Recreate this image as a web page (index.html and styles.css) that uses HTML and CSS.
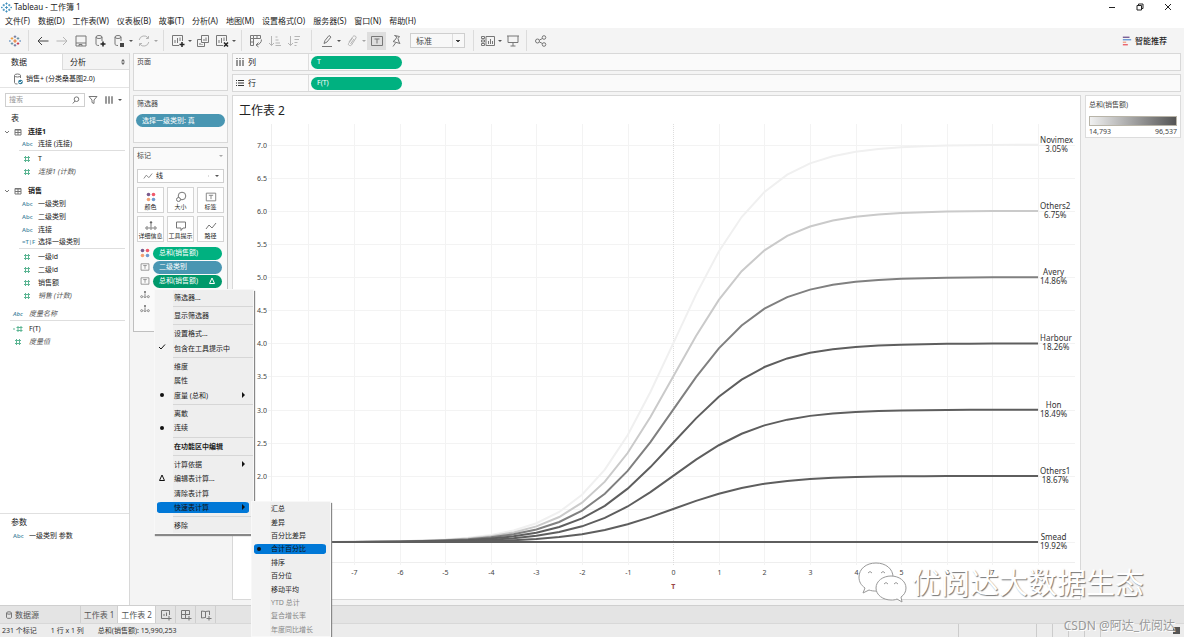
FILE: index.html
```html
<!DOCTYPE html>
<html lang="zh-CN">
<head>
<meta charset="utf-8">
<title>Tableau - 工作簿 1</title>
<link rel="stylesheet" href="styles.css">
</head>
<body>
<svg class="defs" aria-hidden="true">
  <symbol id="logo" viewBox="0 0 14 14"><path d="M7 5v4M5 7h4" stroke="#e8762c" stroke-width="1.300"/><path d="M7 .500v3M5.500 2h3M7 10.500v3M5.500 12h3" stroke="#5b6591"/><path d="M3.500 2.500v3M2 4h3" stroke="#eb9129"/><path d="M10.500 2.500v3M9 4h3M3.500 8.500v3M2 10h3" stroke="#59879b"/><path d="M10.500 8.500v3M9 10h3" stroke="#c72035"/><path d="M1 6v2M0 7h2M13 6v2M12 7h2" stroke="#7099c6"/></symbol>
  <symbol id="logoblue" viewBox="0 0 14 14"><path d="M7 5v4M5 7h4M7 .500v3M5.500 2h3M7 10.500v3M5.500 12h3M3.500 2.500v3M2 4h3M10.500 2.500v3M9 4h3M3.500 8.500v3M2 10h3M10.500 8.500v3M9 10h3M1 6v2M0 7h2M13 6v2M12 7h2" stroke="#2f86b8"/></symbol>
  <symbol id="back" viewBox="0 0 14 14"><path d="M2 7h10.500M6 3L2 7l4 4" stroke="#444"/></symbol>
  <symbol id="fwd" viewBox="0 0 14 14"><path d="M1.500 7H12M8 3l4 4-4 4"/></symbol>
  <symbol id="save" viewBox="0 0 14 14"><path d="M2 2h10v10H2zM2 9h10M5 12v-1.500h3V12"/></symbol>
  <symbol id="dbadd" viewBox="0 0 14 14"><path d="M3 3v7c0 1 1 1.500 3 1.500M9 3v4"/><ellipse cx="6" cy="3" rx="3" ry="1.500"/><path d="M10 7.500v5M7.500 10h5" stroke="#222" stroke-width="1.500"/></symbol>
  <symbol id="db" viewBox="0 0 14 14"><path d="M3 3v7c0 1 1 1.500 3 1.500M9 3v4"/><ellipse cx="6" cy="3" rx="3" ry="1.500"/><path d="M8 9h4v4H8z" fill="#444" stroke="none"/></symbol>
  <symbol id="refresh" viewBox="0 0 14 14"><path d="M2.200 6a5 5 0 0 1 9-2M11.800 8a5 5 0 0 1-9 2M9 4.500h2.500V2M5 9.500H2.500V12"/></symbol>
  <symbol id="chartadd" viewBox="0 0 14 14"><path d="M8 11.500H1.500v-10h10V7M4 9V6M6.500 9V4M9 7V3.500"/><path d="M11 8v5M8.500 10.500h5" stroke="#222" stroke-width="1.500"/></symbol>
  <symbol id="dup" viewBox="0 0 14 14"><path d="M5.500 1.500h7v7h-7zM5.500 5.500h-4v7h7v-4M8 7V5M10 7V3.500M4 11V9M6 11v-1"/></symbol>
  <symbol id="clear" viewBox="0 0 14 14"><path d="M8 11.500H1.500v-10h10V7M4 9V6M6.500 9V4M9 7V3.500"/><path d="M9 8.500l4 4M13 8.500l-4 4" stroke="#222" stroke-width="1.500"/></symbol>
  <symbol id="swap" viewBox="0 0 14 14"><path d="M1.500 1.500h3v3h-3zM4.500 1.500h7v3h-7M1.500 4.500v7h3v-7M8 1.500v3M1.500 8h3M12.500 5.500c0 3-2 5-5 5.500M9.500 8.500L7 11l2.500 2"/></symbol>
  <symbol id="sortasc" viewBox="0 0 14 14"><path d="M3.500 2v9.500M1 9l2.500 2.500L6 9M7.500 3h2M7.500 6h3M7.500 9h4.500M7.500 11.500H13"/></symbol>
  <symbol id="sortdesc" viewBox="0 0 14 14"><path d="M3.500 2v9.500M1 9l2.500 2.500L6 9M7.500 2.500H13M7.500 5.500H12M7.500 8.500h3M7.500 11.500h2"/></symbol>
  <symbol id="pen" viewBox="0 0 14 14"><path d="M4 9.500l1-3 4-5 2 1.500-4 5zM2 12.500h10"/></symbol>
  <symbol id="clip" viewBox="0 0 14 14"><path d="M4 8l4-5.500c1-1.500 4 0 3 1.500L6.500 11c-1 1.500-4 0-3-1.500L7.500 4M9 5l-3.500 5"/></symbol>
  <symbol id="tbox" viewBox="0 0 14 14"><path d="M1.500 2.500h11v9h-11zM4.500 5h5M7 5v4.500"/></symbol>
  <symbol id="pin" viewBox="0 0 14 14"><path d="M5.500 1.500l5 1-1.500 2 1 3.500 1 1.500-7-2 2-1.500 2-3zM6.500 9L4 12.500"/></symbol>
  <symbol id="cards" viewBox="0 0 14 14"><path d="M.500 2.500h3v2h-3zM.500 6h3v2h-3zM.500 9.500h3v2h-3zM5 2.500h8.500v9H5zM7.500 10V7M9.500 10V5M11.500 10V7"/></symbol>
  <symbol id="present" viewBox="0 0 14 14"><path d="M1 2h12M2 2v6.500h10V2M7 8.500V12M4.500 12h5"/></symbol>
  <symbol id="share" viewBox="0 0 14 14"><circle cx="3.500" cy="7" r="2"/><circle cx="10" cy="3.500" r="1.800"/><circle cx="10" cy="10.500" r="1.800"/><path d="M5.500 6l3-1.500M5.500 8l3 1.500"/></symbol>
  <symbol id="showme" viewBox="0 0 12 12"><path d="M1 1.500h8" stroke="#6b4c8a" stroke-width="1.500"/><path d="M1 4.500h10" stroke="#5b8fd0" stroke-width="1.500"/><path d="M1 7.500h4" stroke="#f0a080" stroke-width="1.500"/><path d="M1 10.500h6" stroke="#e8525c" stroke-width="1.500"/></symbol>
  <symbol id="hash" viewBox="0 0 10 10"><path d="M3.500 2v6M6.500 2v6M2 3.500h6M2 6.500h6" stroke="#5cb593"/></symbol>
  <symbol id="hashcalc" viewBox="0 0 10 10"><path d="M5 2v6M8 2v6M3.500 3.500h6M3.500 6.500h6" stroke="#5cb593"/><path d="M0 5h2" stroke="#5cb593"/></symbol>
  <symbol id="table" viewBox="0 0 10 10"><path d="M2 2.500h6v5.500h-6zM2 3h6M2 5.500h6M5 3v5"/></symbol>
  <symbol id="chev" viewBox="0 0 8 8"><path d="M2 3L4 5l2-2"/></symbol>
  <symbol id="source" viewBox="0 0 12 12"><path d="M2.500 2.500v7c0 1 1 1.500 3 1.500M8.500 2.500V5"/><ellipse cx="5.500" cy="2.500" rx="3" ry="1.500"/><circle cx="8.500" cy="9" r="2.300" fill="#2f7c9c" stroke="none"/><path d="M7.200 9l1 1 1.600-2" stroke="#fff"/></symbol>
  <symbol id="dots" viewBox="0 0 12 12"><g stroke="none"><circle cx="3.500" cy="3.500" r="1.800" fill="#7b5a8c"/><circle cx="8.500" cy="3.500" r="1.800" fill="#f0596a"/><circle cx="3.500" cy="8.500" r="1.800" fill="#f5a070"/><circle cx="8.500" cy="8.500" r="1.800" fill="#6f9bd0"/></g></symbol>
  <symbol id="size" viewBox="0 0 12 12"><circle cx="7" cy="5" r="3.800"/><circle cx="3.500" cy="8.500" r="2" fill="#fafafa"/></symbol>
  <symbol id="detail" viewBox="0 0 12 12"><circle cx="6" cy="2.500" r="1.200" fill="#666" stroke="none"/><path d="M6 4v2"/><circle cx="2" cy="8" r="1.200"/><circle cx="6" cy="8" r="1.200"/><circle cx="10" cy="8" r="1.200"/></symbol>
  <symbol id="tip" viewBox="0 0 12 12"><path d="M1.500 2h9v6H8l-2 2.500V8H1.500z"/></symbol>
  <symbol id="path" viewBox="0 0 12 12"><path d="M1 9l3-4 3 3 4-5"/></symbol>
  <symbol id="newsheet" viewBox="0 0 12 12"><path d="M7 9.500H1.500v-8h8V6M4 7V5M6.500 7V3.500M9 7v4.500M6.500 9.500H11.500"/></symbol>
  <symbol id="newdash" viewBox="0 0 12 12"><path d="M7 9.500H1.500v-8h8V6M5.500 1.500v8M1.500 5.500h8M9 7v4.500M6.500 9.500h5"/></symbol>
  <symbol id="newstory" viewBox="0 0 12 12"><path d="M6 9L5.500 8.500 1.500 9V2l4 .500L9.500 2v4M5.500 2.500v6M9 7v4.500M6.500 9.500h5"/></symbol>
</svg>

<div class="app">
  <header class="titlebar">
    <svg class="i12"><use href="#logoblue"/></svg>
    <h1>Tableau - 工作簿 1</h1>
    <div class="winbtns">
      <button aria-label="最小化"><svg class="i8" viewBox="0 0 8 8"><path d="M1 4.500h6" stroke="#222"/></svg></button>
      <button aria-label="还原"><svg class="i8" viewBox="0 0 8 8"><path d="M1 2.500h4.500V7H1zM2.500 2.500V1H7v4.500H5.500" stroke="#222"/></svg></button>
      <button aria-label="关闭"><svg class="i8" viewBox="0 0 8 8"><path d="M1 1l6 6M7 1L1 7" stroke="#222"/></svg></button>
    </div>
  </header>
  <nav class="menubar">
    <button>文件(F)</button><button>数据(D)</button><button>工作表(W)</button><button>仪表板(B)</button><button>故事(T)</button><button>分析(A)</button><button>地图(M)</button><button>设置格式(O)</button><button>服务器(S)</button><button>窗口(N)</button><button>帮助(H)</button>
  </nav>
  <div class="toolbar">
    <button class="tool" aria-label="开始页"><svg class="i12"><use href="#logo"/></svg></button>
    <i class="sep"></i>
    <button class="tool" aria-label="撤销"><svg class="i14"><use href="#back"/></svg></button>
    <button class="tool dim" aria-label="重做"><svg class="i14"><use href="#fwd"/></svg></button>
    <button class="tool" aria-label="保存"><svg class="i14"><use href="#save"/></svg></button>
    <button class="tool" aria-label="新建数据源"><svg class="i14"><use href="#dbadd"/></svg></button>
    <button class="tool" aria-label="暂停更新"><svg class="i14"><use href="#db"/></svg></button>
    <span class="caret"></span>
    <button class="tool dim" aria-label="刷新"><svg class="i14"><use href="#refresh"/></svg></button>
    <span class="caret dim"></span>
    <i class="sep"></i>
    <button class="tool" aria-label="新建工作表"><svg class="i14"><use href="#chartadd"/></svg></button>
    <span class="caret"></span>
    <button class="tool" aria-label="复制"><svg class="i14"><use href="#dup"/></svg></button>
    <button class="tool" aria-label="清除工作表"><svg class="i14"><use href="#clear"/></svg></button>
    <span class="caret"></span>
    <i class="sep"></i>
    <button class="tool" aria-label="交换行和列"><svg class="i14"><use href="#swap"/></svg></button>
    <button class="tool dim" aria-label="升序"><svg class="i14"><use href="#sortasc"/></svg></button>
    <button class="tool dim" aria-label="降序"><svg class="i14"><use href="#sortdesc"/></svg></button>
    <i class="sep wide"></i>
    <button class="tool" aria-label="突出显示"><svg class="i14"><use href="#pen"/></svg></button>
    <span class="caret"></span>
    <button class="tool dim" aria-label="组成员"><svg class="i14"><use href="#clip"/></svg></button>
    <span class="caret dim"></span>
    <button class="tool on" aria-label="显示标记标签"><svg class="i14"><use href="#tbox"/></svg></button>
    <button class="tool" aria-label="固定轴"><svg class="i14"><use href="#pin"/></svg></button>
    <select class="fit" aria-label="适合"><option>标准</option></select>
    <i class="sep"></i>
    <button class="tool" aria-label="显示卡"><svg class="i14"><use href="#cards"/></svg></button>
    <span class="caret"></span>
    <button class="tool" aria-label="演示模式"><svg class="i14"><use href="#present"/></svg></button>
    <i class="sep"></i>
    <button class="tool" aria-label="共享"><svg class="i14"><use href="#share"/></svg></button>
    <button class="showme"><svg class="i10"><use href="#showme"/></svg>智能推荐</button>
  </div>

  <main class="main">
    <aside class="data">
      <div class="panetabs"><button class="cur">数据</button><button>分析<svg class="i8" viewBox="0 0 8 8"><path d="M4 1l2 2.500H2zM4 7l2-2.500H2z" fill="#666" stroke="none"/></svg></button></div>
      <div class="source"><svg class="i12"><use href="#source"/></svg>销售+ (分类桑基图2.0)</div>
      <div class="search">
        <div class="searchbox"><input type="text" placeholder="搜索" aria-label="搜索"><svg class="i8" viewBox="0 0 8 8"><circle cx="4.500" cy="3.200" r="2.300"/><path d="M3 5L.800 7.500"/></svg></div>
        <svg class="i10" viewBox="0 0 10 10"><path d="M1 1.500h8L6 5v3.500L4 7.500V5z"/></svg>
        <i></i>
        <svg class="i10" viewBox="0 0 10 10"><path d="M1.500 1.500h1v7h-1zM4.500 1.500h1v7h-1zM7.500 1.500h1v7h-1z" stroke="#999"/></svg>
        <span class="caret"></span>
      </div>
      <h2>表</h2>
      <ul class="fields">
        <li class="grp"><svg class="i8"><use href="#chev"/></svg><svg class="i10"><use href="#table"/></svg>连接1</li>
        <li class="line"><b>Abc</b>连接 (连接)</li>
        <li><svg class="i10"><use href="#hash"/></svg>T</li>
        <li class="it"><svg class="i10"><use href="#hash"/></svg>连接1 (计数)</li>
      </ul>
      <ul class="fields">
        <li class="grp"><svg class="i8"><use href="#chev"/></svg><svg class="i10"><use href="#table"/></svg>销售</li>
        <li><b>Abc</b>一级类别</li>
        <li><b>Abc</b>二级类别</li>
        <li><b>Abc</b>连接</li>
        <li class="line"><b>=T|F</b>选择一级类别</li>
        <li><svg class="i10"><use href="#hash"/></svg>一级id</li>
        <li><svg class="i10"><use href="#hash"/></svg>二级id</li>
        <li><svg class="i10"><use href="#hash"/></svg>销售额</li>
        <li class="it"><svg class="i10"><use href="#hash"/></svg>销售 (计数)</li>
      </ul>
      <ul class="fields top">
        <li class="it line"><b>Abc</b>度量名称</li>
        <li><svg class="i10"><use href="#hashcalc"/></svg>F(T)</li>
        <li class="it"><svg class="i10"><use href="#hash"/></svg>度量值</li>
      </ul>
      <section class="params">
        <h2>参数</h2>
        <ul class="fields top"><li><b>Abc</b>一级类别 参数</li></ul>
      </section>
    </aside>

    <div class="cards">
      <section class="card pages"><h3>页面</h3></section>
      <section class="card filters"><h3>筛选器</h3><button class="pill blue">选择一级类别: 真</button></section>
      <section class="card marks">
        <h3>标记<span class="caret dim"></span></h3>
        <button class="marktype"><svg class="i10" viewBox="0 0 12 12"><use href="#path"/></svg>线<span class="caret"></span></button>
        <div class="grid">
          <button><svg class="i12"><use href="#dots"/></svg>颜色</button>
          <button><svg class="i12"><use href="#size"/></svg>大小</button>
          <button><svg class="i12"><use href="#tbox"/></svg>标签</button>
          <button><svg class="i12"><use href="#detail"/></svg>详细信息</button>
          <button><svg class="i12"><use href="#tip"/></svg>工具提示</button>
          <button><svg class="i12"><use href="#path"/></svg>路径</button>
        </div>
        <div class="encs">
          <div><svg class="i12"><use href="#dots"/></svg><button class="pill">总和(销售额)</button></div>
          <div><svg class="i10"><use href="#tbox"/></svg><button class="pill blue">二级类别</button></div>
          <div><svg class="i10"><use href="#tbox"/></svg><button class="pill dark">总和(销售额)<svg class="i8" viewBox="0 0 8 8"><path d="M4 1L6.500 6.500h-5z" stroke="#fff"/></svg></button></div>
          <div><svg class="i10"><use href="#detail"/></svg></div>
          <div><svg class="i10"><use href="#detail"/></svg></div>
        </div>
      </section>
    </div>

    <div class="view">
      <div class="shelf"><div class="name"><svg class="i10" viewBox="0 0 10 10"><path d="M2 1v1M5 1v1M8 1v1M2 3v6M5 3v6M8 3v6" stroke="#333"/></svg>列</div><button class="pill">T</button></div>
      <div class="shelf"><div class="name"><svg class="i10" viewBox="0 0 10 10"><path d="M1 2.500h1M1 5h1M1 7.500h1M3 2.500h6M3 5h6M3 7.500h6" stroke="#333"/></svg>行</div><button class="pill">F(T)</button></div>
      <div class="canvas">
        <section class="sheet">
          <h2>工作表 2</h2>
          <div class="plot"><svg id="chart" role="img" aria-label="工作表 2"></svg></div>
        </section>
        <section class="legend">
          <h3>总和(销售额)</h3>
          <div class="ramp"></div>
          <div class="ends"><span>14,793</span><span>96,537</span></div>
        </section>
      </div>
    </div>
  </main>

  <footer>
    <div class="sheets">
      <button class="src"><svg class="i8" viewBox="0 0 8 8"><path d="M1.500 2v4.500c0 1.200 5 1.200 5 0V2"/><ellipse cx="4" cy="2" rx="2.500" ry="1.200"/></svg>数据源</button>
      <button>工作表 1</button>
      <button class="cur">工作表 2</button>
      <button class="new" aria-label="新建工作表"><svg class="i12"><use href="#newsheet"/></svg></button>
      <button class="new" aria-label="新建仪表板"><svg class="i12"><use href="#newdash"/></svg></button>
      <button class="new" aria-label="新建故事"><svg class="i12"><use href="#newstory"/></svg></button>
    </div>
    <div class="status"><span>231 个标记</span><span>1 行 x 1 列</span><span>总和(销售额): 15,990,253</span><div class="nav"><i></i><i></i><i></i><i></i><i></i><i></i><b></b></div></div>
  </footer>

  <div class="menu ctx" role="menu">
    <button>筛选器...</button><hr>
    <button>显示筛选器</button><hr>
    <button>设置格式...</button>
    <button><svg class="i8 mk" viewBox="0 0 8 8"><path d="M1 4l2 2 4-4.500" stroke="#111"/></svg>包含在工具提示中</button><hr>
    <button>维度</button>
    <button>属性</button>
    <button class="dot sub">度量 (总和)</button><hr>
    <button>离散</button>
    <button class="dot">连续</button><hr>
    <button class="strong">在功能区中编辑</button><hr>
    <button class="sub">计算依据</button>
    <button><svg class="i8 mk" viewBox="0 0 8 8"><path d="M4 1L6.500 6.500h-5z" stroke="#111"/></svg>编辑表计算...</button>
    <button>清除表计算</button>
    <button class="hot sub">快速表计算</button><hr>
    <button>移除</button>
  </div>
  <div class="menu quick" role="menu">
    <button>汇总</button><button>差异</button><button>百分比差异</button><button class="hot dot">合计百分比</button><button>排序</button><button>百分位</button><button>移动平均</button><button disabled>YTD 总计</button><button disabled>复合增长率</button><button disabled>年度同比增长</button>
  </div>

  <div class="brand">
    <svg viewBox="0 0 50 42"><g fill="#fff" stroke="#999"><path d="M18 1C8 1 1 7 1 15c0 5 2 8 6 11l-2 5 6-3c8 3 24 0 24-13C35 7 28 1 18 1z"/><path d="M33 14c-8 0-15 5-15 12s7 12 15 12c2 0 4 0 6-1l5 3-1-5c3-2 5-5 5-9 0-7-7-12-15-12z"/><path d="M10 11q2-3 4 0M23 11q2-3 4 0M26 22q2-3 4 0M36 22q2-3 4 0" fill="none"/></g></svg>
    <span>优阅达大数据生态</span>
  </div>
  <div class="credit">CSDN @阿达_优阅达</div>
</div>
<script src="chart.js"></script>
</body>
</html>
```
FILE: styles.css
```css
* { box-sizing: border-box; }
body {
  margin: 0;
  font: 7px/12px "Noto Sans", "Noto Sans CJK SC", sans-serif;
  color: #222;
  background: #f4f4f4;
}
h1, h2, h3, ul { margin: 0; padding: 0; font-size: inherit; font-weight: 400; list-style: none; }
button, input, select {
  font: inherit; color: inherit; border: 0; padding: 0; margin: 0;
  background: none; border-radius: 0; white-space: nowrap;
}
svg { fill: none; stroke: #777; flex: none; display: block; }
.defs { position: absolute; width: 0; height: 0; }
.i8 { width: 8px; height: 8px; }
.i10 { width: 10px; height: 10px; }
.i12 { width: 12px; height: 12px; }
.i14 { width: 14px; height: 14px; }
.dim { opacity: .5; }
.caret { width: 6px; display: flex; justify-content: center; flex: none; }
.caret::after { content: ""; border: 2px solid transparent; border-top-color: #555; border-bottom: 0; }

.app { position: relative; display: flex; flex-direction: column; height: 100vh; overflow: hidden; }

.titlebar { display: flex; align-items: center; gap: 2px; height: 14px; background: #fff; font-size: 8px; }
.titlebar h1 { flex: 1; }
.titlebar > svg { width: 11px; height: 11px; margin-left: 1px; }
.winbtns { display: flex; gap: 20px; padding-right: 12px; }
.menubar { display: flex; align-items: center; gap: 8px; height: 14px; padding: 0 5px; background: #fff; font-size: 8px; }

.toolbar { display: flex; align-items: center; height: 25px; padding-left: 5px; background: #f4f4f4; }
.tool { width: 19px; height: 18px; display: flex; align-items: center; justify-content: center; }
.tool.on { background: #dedede; }
.sep { width: 1px; height: 21px; margin: 0 4px; background: #dcdcdc; }
.sep.wide { margin: 0 5px 0 8px; }
.fit {
  width: 55px; height: 15px; margin: 0 4px 0 5px; padding: 0 5px; font-size: 8px; color: #444;
  border: 1px solid #cfcfcf; appearance: none;
  background:
    linear-gradient(45deg, transparent 50%, #444 50%) right 6px center / 2px 2px no-repeat,
    linear-gradient(-45deg, transparent 50%, #444 50%) right 4px center / 2px 2px no-repeat,
    linear-gradient(#ddd, #ddd) right 11px center / 1px 100% no-repeat #f8f8f8;
}
.showme { margin-left: auto; margin-right: 17px; display: flex; gap: 3px; align-items: center; font-size: 8px; font-weight: 500; }

.main { flex: 1; min-height: 0; display: flex; gap: 3px; padding-bottom: 5px; }
.data { width: 130px; flex: none; margin-bottom: -5px; background: #fff; border-right: 1px solid #d8d8d8; display: flex; flex-direction: column; }
.panetabs { display: grid; grid-template-columns: 62px 1fr; height: 17px; font-size: 8px; }
.panetabs button { display: flex; align-items: center; justify-content: space-between; padding: 0 2px 0 7px; background: #f4f4f4; border: solid #dcdcdc; border-width: 1px 0 1px 1px; }
.panetabs .cur { background: #fff; border-color: #dcdcdc transparent transparent; padding-left: 11px; border-left: 0; }
.source { display: flex; align-items: center; gap: 2px; height: 18px; padding-left: 12px; border-bottom: 1px solid #e4e4e4; }
.search { display: flex; align-items: center; gap: 3px; padding: 5px 7px 0 5px; }
.search i { width: 1px; height: 11px; background: #ddd; }
.searchbox { display: flex; align-items: center; width: 80px; height: 14px; padding: 0 4px 0 3px; border: 1px solid #cfcfcf; }
.searchbox input { flex: 1; min-width: 0; outline: 0; }
.searchbox input::placeholder { color: #999; }
.data h2 { padding: 5px 11px 1px; font-size: 8px; }
.fields { padding-bottom: 6px; }
.fields li { display: flex; align-items: center; height: 13px; margin: 0 4px 0 19px; }
.fields li > svg { margin: 0 6px 0 3px; }
.fields b { width: 19px; padding-left: 3px; font-size: 6px; font-weight: 500; color: #3d7f9b; }
.fields .line { border-bottom: 1px solid #dedede; margin-bottom: 1px; }
.fields .it { font-style: italic; color: #555; }
.fields .grp { margin-left: 3px; font-weight: 700; }
.fields .grp > svg { margin: 0; }
.fields .grp > svg + svg { margin: 0 5px 0 2px; }
.fields.top li { margin-left: 10px; }
.params { margin-top: auto; height: 92px; border-top: 1px solid #e0e0e0; }
.params h2 { padding-top: 2px; }

.cards { width: 95px; flex: none; display: flex; flex-direction: column; gap: 4px; }
.card { border: 1px solid #d8d8d8; background: #fafafa; padding: 1px 3px; }
.card h3 { display: flex; justify-content: space-between; align-items: center; height: 13px; color: #444; }
.pages { height: 38px; }
.filters { height: 48px; }
.filters .pill { margin: 4px 0 0 -1px; width: 89px; }
.marks { height: 185px; border-color: #bfbfbf; }
.pill { display: flex; align-items: center; justify-content: space-between; height: 13px; padding: 0 6px; border-radius: 7px; background: #00b180; color: #fff; }
.pill.blue { background: #4996b2; }
.pill.dark { background: #00996b; }
.marktype { display: flex; align-items: center; gap: 3px; width: 87px; height: 14px; margin-top: 7px; padding: 0 3px 0 5px; border: 1px solid #cfcfcf; background: #fff; }
.marktype .caret { margin-left: auto; padding-left: 4px; width: 12px; border-left: 1px solid #ddd; }
.grid { display: grid; grid-template-columns: repeat(3, 27px); grid-auto-rows: 26px; gap: 3px; margin: 4px 0; }
.grid button { display: flex; flex-direction: column; align-items: center; justify-content: space-between; padding: 3px 0 0; border: 1px solid #d4d4d4; background: #fff; font-size: 6px; line-height: 9px; }
.encs > div { display: grid; grid-template-columns: 16px 69px; height: 14px; align-items: center; }
.encs > div > svg { justify-self: center; }
.encs .pill { width: 69px; }

.view { flex: 1; min-width: 0; display: flex; flex-direction: column; gap: 3px; padding-right: 3px; margin-left: 1px; }
.shelf { display: flex; align-items: center; gap: 2px; height: 18px; border: 1px solid #d8d8d8; background: #fafafa; }
.shelf .name { display: flex; align-items: center; gap: 3px; width: 76px; height: 100%; padding-left: 2px; border-right: 1px solid #dedede; font-size: 8px; }
.shelf .pill { width: 91px; }
.canvas { flex: 1; min-height: 0; display: flex; align-items: flex-start; gap: 4px; }
.sheet { flex: 1; min-width: 0; align-self: stretch; display: flex; flex-direction: column; background: #fff; border: 1px solid #d8d8d8; }
.sheet h2 { height: 28px; padding: 6px 6px 0; font-size: 12px; line-height: 18px; }
.plot { flex: 1; min-height: 0; }
#chart { width: 100%; height: 100%; stroke: none; }
#chart text { fill: #444; }
#chart .mark { font-size: 8px; fill: #333; }
#chart .axis { font-weight: 700; fill: #944; }
.legend { width: 96px; padding: 2px 3px 0; border: 1px solid #dcdcdc; background: #fff; color: #444; }
.legend h3 { height: 18px; line-height: 14px; }
.ramp { height: 10px; border: 1px solid #b8b4a8; background: linear-gradient(90deg, #f0f0f0, #555); }
.ends { display: flex; justify-content: space-between; line-height: 11px; }

footer { color: #333; }
.sheets { display: flex; height: 18px; background: #e4e4e4; border-top: 1px solid #cfcfcf; }
.sheets button { width: 37px; display: flex; align-items: center; justify-content: center; border-right: 1px solid #cfcfcf; font-size: 8px; color: #555; }
.sheets .src { width: 81px; justify-content: flex-start; gap: 2px; padding-left: 5px; }
.sheets .cur { background: #fff; width: 38px; }
.sheets .new { width: 20px; }
.status { display: flex; gap: 14px; height: 14px; padding-left: 2px; line-height: 13px; background: #ececec; border-top: 1px solid #d8d8d8; }
.nav { margin-left: auto; display: flex; align-items: center; gap: 15px; padding-right: 4px; }
.nav i { width: 1px; height: 13px; background: #ccc; }
.nav i:first-child { margin-right: 62px; }
.nav b { width: 7px; height: 7px; margin-left: 57px; background: #555; }

.menu { position: absolute; display: flex; flex-direction: column; background: linear-gradient(90deg, #f3f3f3 18px, #eee 18px); border: 1px solid #f8f8f8; box-shadow: 1px 2px 1px #888; }
.menu button { flex: 5; position: relative; margin: 0 4px 0 2px; padding-left: 17px; text-align: left; line-height: 9px; min-height: 0; border: solid transparent; border-width: 2px 0; border-radius: 4px; background-clip: padding-box; }
.menu hr { flex: 2; width: auto; margin: 0 0 0 18px; border: 0; background: linear-gradient(#d6d6d6, #d6d6d6) center / 100% 1px no-repeat; }
.menu .strong { font-weight: 700; }
.menu .hot { background-color: #0078d7; color: #111; }
.menu button:disabled { color: #888; }
.mk { position: absolute; left: 1px; top: 0; }
.dot::before { content: ""; position: absolute; left: 3px; top: 3px; width: 4px; height: 4px; border-radius: 50%; background: #111; }
.sub::after { content: ""; position: absolute; right: 4px; top: 2px; border: 3px solid transparent; border-left-color: #111; border-right: 0; }
.ctx { left: 154px; top: 289px; width: 100px; height: 245px; }
.quick { left: 251px; top: 501px; width: 80px; bottom: 0; }

.brand { position: absolute; right: 40px; bottom: 33px; display: flex; align-items: center; gap: 4px; font-size: 29px; line-height: 40px; color: #fff; text-shadow: 1px 1px 1px #777; pointer-events: none; }
.brand svg { width: 50px; height: 42px; }
.credit { position: absolute; right: 9px; bottom: 3px; font-size: 12px; line-height: 16px; color: #999; text-shadow: 1px 1px 0 #fff; pointer-events: none; }
```
FILE: chart.js
```js
const svg = document.getElementById('chart');
const NS = 'http://www.w3.org/2000/svg';
const series = [
  { name: 'Novimex', pct: '3.05%', end: 7, color: '#f0f0f0' },
  { name: 'Others2', pct: '6.75%', end: 6, color: '#cacaca' },
  { name: 'Avery', pct: '14.86%', end: 5, color: '#808080' },
  { name: 'Harbour', pct: '18.26%', end: 4, color: '#5e5e5e' },
  { name: 'Hon', pct: '18.49%', end: 3, color: '#5e5e5e' },
  { name: 'Others1', pct: '18.67%', end: 2, color: '#5e5e5e' },
  { name: 'Smead', pct: '19.92%', end: 1, color: '#5e5e5e' }
];

function add(tag, attrs, text) {
  const el = document.createElementNS(NS, tag);
  for (const k in attrs) el.setAttribute(k, attrs[k]);
  if (text !== undefined) el.textContent = text;
  svg.appendChild(el);
  return el;
}

function draw() {
  svg.replaceChildren();
  const w = svg.clientWidth, h = svg.clientHeight;
  const left = 38, right = w - 5, bottom = h - 37;
  const x = t => left + (t + 8.82) / 17.63 * (right - left);
  const y = v => (7.31 - v) / 6.61 * bottom;

  for (let v = 1; v <= 7; v += 0.5) {
    const gy = Math.round(y(v)) + 0.5;
    add('line', { x1: left - 3, x2: right, y1: gy, y2: gy, stroke: '#f3f3f3' });
    add('text', { x: left - 4, y: gy + 2, 'text-anchor': 'end' }, v.toFixed(1));
  }
  add('path', { d: `M${left + 0.5} 0V${bottom + 0.5}H${right}`, stroke: '#eeeeee', fill: 'none' });
  for (let t = -8; t <= 8; t++) {
    const gx = Math.round(x(t)) + 0.5;
    add('line', { x1: gx, x2: gx, y1: 0, y2: bottom + 3, stroke: t ? '#f3f3f3' : '#ddd', 'stroke-dasharray': t ? 'none' : '1 1' });
    add('text', { x: gx, y: bottom + 13, 'text-anchor': 'middle' }, t);
  }
  add('text', { x: x(0), y: bottom + 27, 'text-anchor': 'middle', class: 'axis' }, 'T');

  for (const s of series) {
    const pts = [];
    for (let t = -8; t <= 8; t += 0.5) {
      pts.push(x(t) + ',' + y(1 + (s.end - 1) / (1 + Math.exp(-t))));
    }
    add('polyline', { points: pts.join(' '), fill: 'none', stroke: s.color, 'stroke-width': 2 });
    const a = add('text', { y: y(s.end) - 2, class: 'mark', 'text-anchor': 'middle' }, s.name);
    const b = add('text', { y: y(s.end) + 7, class: 'mark', 'text-anchor': 'middle' }, s.pct);
    const cx = x(8) + 2 + Math.max(a.getComputedTextLength(), b.getComputedTextLength()) / 2;
    a.setAttribute('x', cx);
    b.setAttribute('x', cx);
  }
}

draw();
window.addEventListener('resize', draw);
```
